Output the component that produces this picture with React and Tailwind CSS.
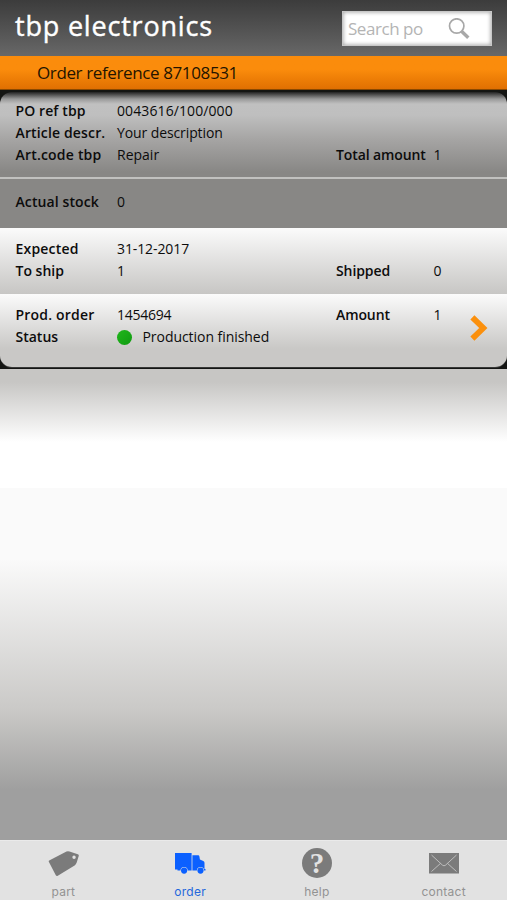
const tabs = [
  { label: 'part', icon: TagIcon },
  { label: 'order', icon: TruckIcon, active: true },
  { label: 'help', icon: HelpIcon },
  { label: 'contact', icon: MailIcon },
];

function TagIcon() {
  return (
    <svg width="32" height="32" viewBox="0 0 32 32" fill="currentColor">
      <path fillRule="evenodd" d="M1.8 14.8 Q1.4 14 2.2 13.5 L19.5 4.5 Q21 4 22.5 4.5 L30.8 7.2 Q32 7.6 31.8 8.8 L29.6 15.8 Q29 17.6 27.6 18.5 L10.8 28.8 Q9.5 29.5 8.8 28.3 Z M27 8.6 a1.7 1.7 0 1 0 .1 3.4 a1.7 1.7 0 1 0 -.1 -3.4 Z" />
    </svg>
  );
}

function TruckIcon() {
  return (
    <svg width="32" height="32" viewBox="0 0 32 32" fill="currentColor">
      <path d="M1 6 H17.6 V23.5 H13.7 a3.6 3.6 0 0 0 -7.2 0 H3.5 V22.5 H1 Z" />
      <path d="M18.4 8.2 H24.2 Q25.2 8.2 25.4 9.4 L25.9 12.6 L29.3 14 Q30.5 14.6 30.5 15.8 V22 H31.5 V23.5 H30.1 a3.6 3.6 0 0 0 -7.2 0 H18.4 Z" />
      <circle cx="10.1" cy="23.6" r="3.1" />
      <circle cx="26.5" cy="23.6" r="3.1" />
    </svg>
  );
}

function HelpIcon() {
  return (
    <div className="flex h-[30px] w-[30px] items-center justify-center rounded-full bg-[#7b7b7b] font-['Liberation_Serif',serif] text-[29px] font-bold leading-none text-[#e2e2e2]">
      ?
    </div>
  );
}

function MailIcon() {
  return (
    <svg width="32" height="32" viewBox="0 0 32 32">
      <rect x="1" y="6" width="30" height="20.5" fill="#7b7b7b" />
      <path d="M3.5 8 L14.5 18.2 Q16 19.4 17.5 18.2 L28.5 8 M3.5 24.5 L12.5 16.4 M28.5 24.5 L19.5 16.4" fill="none" stroke="#c4c4c4" strokeWidth="0.9" />
    </svg>
  );
}

function Row({ label, value, tracking, labelTracking, extra, extraValue }) {
  return (
    <div className="flex h-[22px] items-center pl-[15.5px]">
      <span className={`w-[101.5px] shrink-0 font-semibold ${labelTracking || ''}`}>{label}</span>
      <span className={`flex w-[219px] shrink-0 items-center ${tracking || ''}`}>{value}</span>
      {extra && <span className="w-[97.5px] shrink-0 font-semibold tracking-[-0.1px]">{extra}</span>}
      {extra && <span>{extraValue}</span>}
    </div>
  );
}

export default function App() {
  return (
    <div className="flex h-[900px] w-[507px] flex-col overflow-hidden whitespace-nowrap font-['Open_Sans',sans-serif] text-[14px] leading-[22px] text-[#0c0c0c]">
      <header className="flex h-14 shrink-0 items-start justify-between bg-linear-to-b from-[#3c3c3c] to-[#686868] pl-[15px] pr-[15px]">
        <h1 className="mt-2 text-[27px] leading-9 font-medium tracking-[0.8px] text-white [-webkit-text-stroke:0.4px_white]">tbp electronics</h1>
        <div className="mt-[11px] flex h-[35px] w-[150px] items-center border border-[#c8c8c8] bg-white pl-[5px] text-[#b4b4b4] shadow-[inset_0_0_4px_#999]">
          <span className="w-[100px] text-[17px] tracking-[-0.45px]">Search po</span>
          <svg width="22" height="22" viewBox="0 0 22 22" fill="none" stroke="#a8a8a8">
            <circle cx="8.7" cy="8" r="7.2" strokeWidth="1.7" />
            <path d="M13.3 13 L20.3 19.8" strokeWidth="3.4" />
          </svg>
        </div>
      </header>

      <div className="flex h-[34px] shrink-0 items-center border-b border-[#8b4900] bg-linear-to-b from-[#fb8c0c] from-40% to-[#e07002] pl-[37px] text-[17px] tracking-[-0.38px] text-[#241400]">
        Order reference 87108531
      </div>

      {/* Order details */}
      <div className="shrink-0 bg-[#141513] pt-[2px] pb-px">
        <section className="overflow-hidden rounded-xl border-b border-[#373837]">
          <div className="h-[87px] border-b-2 border-[#c1c1bf] bg-[linear-gradient(#222_0px,#555_3px,#999_7px,#c0c0c0_12px,#bfbfbf_23px,#a5a4a3_48px,#888785_80px)] pt-[8px]">
            <Row label="PO ref tbp" labelTracking="tracking-[0.1px]" value="0043616/100/000" tracking="tracking-[0.1px]" />
            <Row label="Article descr." labelTracking="tracking-[0.15px]" value="Your description" tracking="tracking-[-0.1px]" />
            <Row label="Art.code tbp" labelTracking="tracking-[0.2px]" value="Repair" extra="Total amount" extraValue="1" />
          </div>
          <div className="h-[49px] bg-[#888785] pt-3">
            <Row label="Actual stock" labelTracking="tracking-[0.1px]" value="0" />
          </div>
          <div className="h-[66px] bg-linear-to-b from-[#fbfbfb] to-[#c7c6c4] pt-[10px]">
            <Row label="Expected" labelTracking="tracking-[0.2px]" value="31-12-2017" tracking="tracking-[-0.1px]" />
            <Row label="To ship" value="1" extra="Shipped" extraValue="0" />
          </div>
          <div className="flex h-[73px] items-start bg-linear-to-b from-[#fbfbfb] to-[#c9c8c6] to-75% pt-[10px]">
            <div className="w-[470px]">
              <Row label="Prod. order" labelTracking="tracking-[0.2px]" value="1454694" tracking="tracking-[-0.25px]" extra="Amount" extraValue="1" />
              <Row
                label="Status"
                value={<><i className="mr-[10.5px] size-[15px] rounded-full bg-linear-to-br from-[#20b61c] to-[#109b10]" />Production finished</>}
                tracking="tracking-[-0.05px]"
              />
            </div>
            <svg className="mt-[11px]" width="18" height="26" viewBox="0 0 18 26" fill="none" stroke="#fb900d" strokeWidth="5.8">
              <path d="M2.4 2.4 L13.3 13 L2.4 23.6" />
            </svg>
          </div>
        </section>
      </div>

      <main className="flex-1 bg-[linear-gradient(#c7c6c4_0px,#c7c6c4_13px,#fff_73px,#fff_119px,#fafafa_119px,#fafafa_190px,#cac9c7_341px,#9f9f9f_421px,#9f9f9f_470px)]" />

      <nav className="flex h-[60px] shrink-0 border-t border-[#eaeaea] bg-[#e2e2e2] font-[Inter,sans-serif] text-[12px] leading-[14px]">
        {tabs.map(({ label, icon: Icon, active }) => (
          <div key={label} className={`flex flex-1 flex-col items-center pt-[6px] ${active ? 'text-[#0b60ff]' : 'text-[#7b7b7b]'}`}>
            <div className="flex h-8 items-center">
              <Icon />
            </div>
            <span className={`mt-[6px] tracking-[0.25px] ${active ? 'text-[#2468dc]' : 'text-[#929292]'}`}>{label}</span>
          </div>
        ))}
      </nav>
    </div>
  );
}
